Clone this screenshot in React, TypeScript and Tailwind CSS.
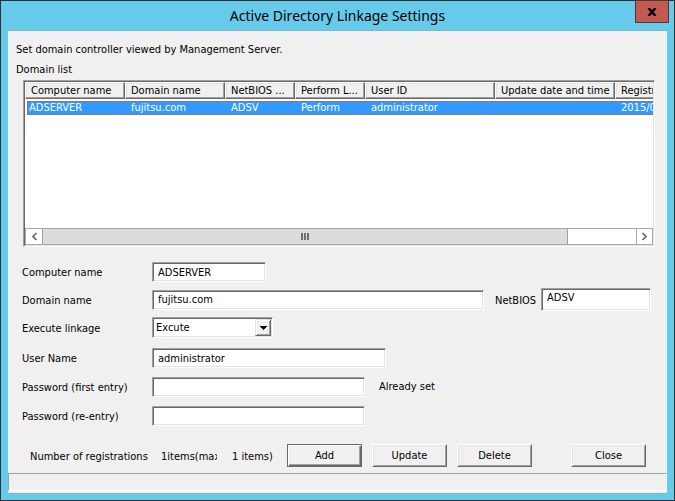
import type { InputHTMLAttributes, ButtonHTMLAttributes } from 'react';
import { clsx } from 'clsx';

const columns = [
  { title: 'Computer name', width: 'w-[100px]' },
  { title: 'Domain name', width: 'w-[100px]' },
  { title: 'NetBIOS ...', width: 'w-[70px]' },
  { title: 'Perform L...', width: 'w-[70px]' },
  { title: 'User ID', width: 'w-[130px]' },
  { title: 'Update date and time', width: 'w-[120px]' },
  { title: 'Registration date', width: 'w-[120px]' },
];

const domains = [
  ['ADSERVER', 'fujitsu.com', 'ADSV', 'Perform', 'administrator', '', '2015/04/01'],
];

const sunken =
  'border border-t-[#a0a0a0] border-l-[#a0a0a0] border-r-white border-b-white bg-white shadow-[inset_1px_1px_0_#696969,inset_-1px_-1px_0_#e3e3e3]';

function TextField({ className, ...props }: InputHTMLAttributes<HTMLInputElement>) {
  return (
    <input
      className={clsx(sunken, 'min-w-0 px-[5px] leading-4 outline-none', className)}
      {...props}
    />
  );
}

function Label({ htmlFor, children }: { htmlFor: string; children: string }) {
  return (
    <label htmlFor={htmlFor} className="w-[130px] shrink-0 pt-0.5 whitespace-nowrap">
      {children}
    </label>
  );
}

function PushButton({ isDefault, className, ...props }: ButtonHTMLAttributes<HTMLButtonElement> & { isDefault?: boolean }) {
  return (
    <button
      type="button"
      className={clsx(
        'h-[23px] w-[75px] shrink-0 border bg-[#f0f0f0] text-center leading-4',
        isDefault
          ? 'border-[#696969] shadow-[inset_1px_1px_0_#fff,inset_-1px_-1px_0_#696969,inset_-2px_-2px_0_#a0a0a0]'
          : 'border-t-white border-l-white border-r-[#696969] border-b-[#696969] shadow-[inset_1px_1px_0_#e3e3e3,inset_-1px_-1px_0_#a0a0a0]',
        className,
      )}
      {...props}
    />
  );
}

function DomainTable() {
  return (
    <div className={clsx(sunken, 'p-px')}>
      <div className="h-[146px] overflow-hidden">
        <table className="w-[710px] table-fixed border-separate border-spacing-0">
          <thead>
            <tr>
              {columns.map((col) => (
                <th
                  key={col.title}
                  className={clsx(
                    col.width,
                    'h-[17px] border border-t-white border-l-white border-r-[#696969] border-b-[#696969] bg-[#f0f0f0] p-0 pt-px pl-[5px] text-left leading-[14px] font-normal whitespace-nowrap shadow-[inset_-1px_-1px_0_#a0a0a0,inset_1px_1px_0_#e3e3e3]',
                  )}
                >
                  {col.title}
                </th>
              ))}
            </tr>
            <tr aria-hidden="true">
              <td colSpan={7} className="h-0.5 p-0" />
            </tr>
          </thead>
          <tbody>
            {domains.map((row) => (
              <tr key={row[0]} className="text-white">
                {row.map((cell, i) => (
                  <td
                    key={i}
                    className={clsx(
                      'h-3.5 p-0 leading-3 whitespace-nowrap',
                      i === 0 ? 'pl-0.5' : '',
                    )}
                  >
                    <div
                      className={clsx(
                        'h-3.5 border-y border-dotted border-[#cc6600] bg-[#3399ff] leading-3',
                        i === 0 ? 'border-l pl-px' : 'pl-1.5',
                      )}
                    >
                      {cell}
                    </div>
                  </td>
                ))}
              </tr>
            ))}
          </tbody>
        </table>
      </div>
      <div className="flex h-[17px] border border-[#a9a9a9] bg-white text-[#606060]">
        <button type="button" aria-label="Scroll left" className="grid w-4 place-items-center">
          <svg width="7" height="9" viewBox="0 0 7 9" fill="none" stroke="currentColor" strokeWidth="1.6">
            <path d="M5.5 1 2 4.5 5.5 8" />
          </svg>
        </button>
        <div className="flex flex-1">
          <div className="flex flex-[23] items-center justify-center gap-px border-x border-[#a0a0a0] bg-[#dcdcdc]">
            <span className="h-[7px] w-0.5 bg-[#707070]" />
            <span className="h-[7px] w-0.5 bg-[#707070]" />
            <span className="h-[7px] w-0.5 bg-[#707070]" />
          </div>
          <div className="flex-[3]" />
        </div>
        <button type="button" aria-label="Scroll right" className="grid w-4 place-items-center border-l border-[#a9a9a9]">
          <svg width="7" height="9" viewBox="0 0 7 9" fill="none" stroke="currentColor" strokeWidth="1.6">
            <path d="M1.5 1 5 4.5 1.5 8" />
          </svg>
        </button>
      </div>
    </div>
  );
}

export default function App() {
  return (
    <div className="flex min-h-screen flex-col border border-[#333333] bg-[#66cbea] px-[7px] pb-1.5 font-['DejaVu_Sans_Condensed','Noto_Sans',sans-serif] text-[11px] leading-4 text-black">
      <header className="flex h-[29px] items-start">
        <div className="w-8 shrink-0" />
        <h1 className="flex-1 pt-[3px] text-center font-['Noto_Sans',sans-serif] text-sm leading-6 whitespace-nowrap">
          Active Directory Linkage Settings
        </h1>
        <button
          type="button"
          aria-label="Close window"
          className="-mt-px mr-[-2px] grid h-[23px] w-[34px] shrink-0 place-items-center border border-[#4c3a3a] bg-[#c35a50]"
        >
          <svg width="10" height="8" viewBox="0 0 10 8" fill="none" stroke="#000" strokeWidth="2.4">
            <path d="M1.5 0 8.5 8M8.5 0 1.5 8" />
          </svg>
        </button>
      </header>

      <main className="flex flex-1 flex-col border-y border-[#7db4cc] bg-[#f0f0f0] pt-[11px]">
        <p className="pl-2">Set domain controller viewed by Management Server.</p>
        <p className="pt-1 pl-2">Domain list</p>

        <div className="pt-0.5 pr-3 pl-[15px]">
          <DomainTable />
        </div>

        <form className="flex flex-col gap-2.5 pt-[15px] pr-4 pl-3.5">
          <div className="flex flex-col gap-1.5">
            <div className="flex items-center">
              <Label htmlFor="computer">Computer name</Label>
              <TextField id="computer" className="h-5 w-[114px]" defaultValue="ADSERVER" />
            </div>
            <div className="flex items-center">
              <Label htmlFor="domain">Domain name</Label>
              <TextField id="domain" className="h-5 flex-1" defaultValue="fujitsu.com" />
              <label htmlFor="netbios" className="w-[57px] shrink-0 pt-0.5 pl-[11px]">
                NetBIOS
              </label>
              <TextField id="netbios" className="h-[23px] w-[110px] pb-1" defaultValue="ADSV" />
            </div>
            <div className="flex items-center">
              <Label htmlFor="linkage">Execute linkage</Label>
              <div className={clsx(sunken, 'grid h-[21px] w-[121px] p-px')}>
                <select
                  id="linkage"
                  className="col-start-1 row-start-1 appearance-none pl-0.5 leading-4 outline-none"
                  defaultValue="Excute"
                >
                  <option>Excute</option>
                  <option>Not excute</option>
                </select>
                <span className="pointer-events-none col-start-1 row-start-1 grid w-4 place-items-center justify-self-end border border-t-[#e3e3e3] border-l-[#e3e3e3] border-r-[#696969] border-b-[#696969] bg-[#f0f0f0] shadow-[inset_1px_1px_0_#fff,inset_-1px_-1px_0_#a0a0a0]">
                  <svg width="7" height="4" viewBox="0 0 7 4" shapeRendering="crispEdges">
                    <path d="M0 0h7v1H6v1H5v1H4v1H3V3H2V2H1V1H0z" />
                  </svg>
                </span>
              </div>
            </div>
          </div>
          <div className="flex flex-col gap-[9px]">
            <div className="flex items-center">
              <Label htmlFor="user">User Name</Label>
              <TextField id="user" className="h-5 w-[234px]" defaultValue="administrator" />
            </div>
            <div className="flex items-center">
              <Label htmlFor="password">Password (first entry)</Label>
              <TextField id="password" type="password" className="h-5 w-[213px]" />
              <span className="pl-3.5">Already set</span>
            </div>
            <div className="flex items-center">
              <Label htmlFor="password2">Password (re-entry)</Label>
              <TextField id="password2" type="password" className="h-5 w-[213px]" />
            </div>
          </div>
        </form>

        <div className="flex items-center pt-[18px] pr-[21px] pl-[22px] whitespace-nowrap">
          <span className="w-[131px] shrink-0 pt-0.5">Number of registrations</span>
          <span className="w-14 shrink-0 overflow-hidden pt-0.5">1items(maxi</span>
          <span className="w-[70px] shrink-0 pt-0.5 pl-[15px]">1 items)</span>
          <div className="flex flex-1 gap-2.5">
            <PushButton isDefault>Add</PushButton>
            <PushButton>Update</PushButton>
            <PushButton>Delete</PushButton>
            <PushButton className="ml-auto">Close</PushButton>
          </div>
        </div>

        <footer className="mt-1.5 mb-0.5 h-[18px] border border-t-[#a0a0a0] border-l-[#a0a0a0] border-r-white border-b-white" />
      </main>
    </div>
  );
}
